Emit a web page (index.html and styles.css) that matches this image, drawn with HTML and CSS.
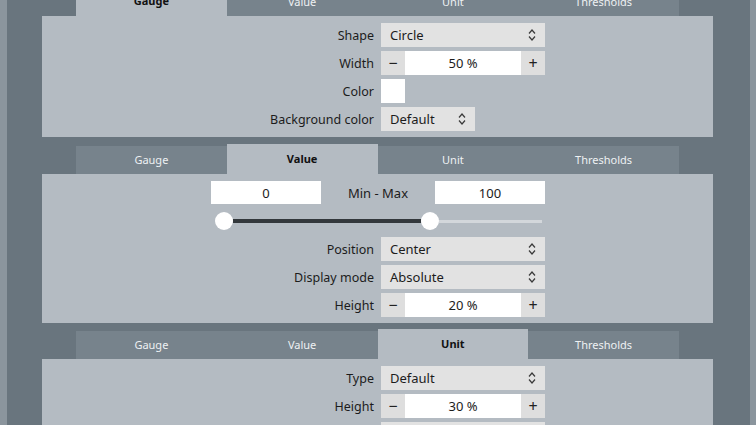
FILE: index.html
```html
<!DOCTYPE html>
<html>
<head>
<meta charset="utf-8">
<link rel="stylesheet" href="styles.css">
</head>
<body>
<div class="app">
  <section class="group first">
    <div class="tabs">
      <div class="tab active">Gauge</div>
      <div class="tab">Value</div>
      <div class="tab">Unit</div>
      <div class="tab">Thresholds</div>
    </div>
    <div class="panel p1">
      <div class="form">
        <div class="label">Shape</div>
        <div class="select wide"><span>Circle</span><svg class="chev" width="8" height="14" viewBox="0 0 8 14"><path d="M1 5.5 L4 2 L7 5.5 M1 8.5 L4 12 L7 8.5" fill="none" stroke="#3a3a3a" stroke-width="1.2"/></svg></div>
        <div class="label">Width</div>
        <div class="spin"><span class="btn">−</span><span class="val">50 %</span><span class="btn">+</span></div>
        <div class="label">Color</div>
        <div class="swatch"></div>
        <div class="label">Background color</div>
        <div class="select narrow"><span>Default</span><svg class="chev" width="8" height="14" viewBox="0 0 8 14"><path d="M1 5.5 L4 2 L7 5.5 M1 8.5 L4 12 L7 8.5" fill="none" stroke="#3a3a3a" stroke-width="1.2"/></svg></div>
      </div>
    </div>
  </section>

  <section class="group second">
    <div class="tabs">
      <div class="tab">Gauge</div>
      <div class="tab active">Value</div>
      <div class="tab">Unit</div>
      <div class="tab">Thresholds</div>
    </div>
    <div class="panel p2">
      <div class="minmax">
        <div class="num">0</div>
        <div class="mmlabel">Min - Max</div>
        <div class="num">100</div>
      </div>
      <div class="slider">
        <span class="thumb"></span>
        <span class="track dark" style="width:188px"></span>
        <span class="thumb"></span>
        <span class="track light"></span>
      </div>
      <div class="form">
        <div class="label">Position</div>
        <div class="select wide"><span>Center</span><svg class="chev" width="8" height="14" viewBox="0 0 8 14"><path d="M1 5.5 L4 2 L7 5.5 M1 8.5 L4 12 L7 8.5" fill="none" stroke="#3a3a3a" stroke-width="1.2"/></svg></div>
        <div class="label">Display mode</div>
        <div class="select wide"><span>Absolute</span><svg class="chev" width="8" height="14" viewBox="0 0 8 14"><path d="M1 5.5 L4 2 L7 5.5 M1 8.5 L4 12 L7 8.5" fill="none" stroke="#3a3a3a" stroke-width="1.2"/></svg></div>
        <div class="label">Height</div>
        <div class="spin"><span class="btn">−</span><span class="val">20 %</span><span class="btn">+</span></div>
      </div>
    </div>
  </section>

  <section class="group third">
    <div class="tabs">
      <div class="tab">Gauge</div>
      <div class="tab">Value</div>
      <div class="tab active">Unit</div>
      <div class="tab">Thresholds</div>
    </div>
    <div class="panel p3">
      <div class="form">
        <div class="label">Type</div>
        <div class="select wide"><span>Default</span><svg class="chev" width="8" height="14" viewBox="0 0 8 14"><path d="M1 5.5 L4 2 L7 5.5 M1 8.5 L4 12 L7 8.5" fill="none" stroke="#3a3a3a" stroke-width="1.2"/></svg></div>
        <div class="label">Height</div>
        <div class="spin"><span class="btn">−</span><span class="val">30 %</span><span class="btn">+</span></div>
        <div class="label">Color</div>
        <div class="select wide"><span>Default</span></div>
      </div>
    </div>
  </section>
</div>
</body>
</html>
```

FILE: styles.css
```css
html, body {
  margin: 0;
  padding: 0;
  height: 100%;
  overflow: hidden;
}
body {
  background: #69757e;
  font-family: "Noto Sans", "Open Sans", sans-serif;
  font-size: 12.3px;
  color: #1c1c1c;
}
.app {
  box-sizing: border-box;
  width: 756px;
  height: 480px;
  border-left: 7px solid #8b959d;
  border-right: 6px solid #8b959d;
  padding-left: 35px;
  margin-top: -14px;
}
.group {
  width: 671px;
}
.first { margin-bottom: 7px; }
.second { margin-bottom: 6px; }
.tabs {
  display: flex;
  margin: 0 34px;
  height: 30px;
  align-items: flex-end;
}
.tab {
  box-sizing: border-box;
  width: 151px;
  height: 28px;
  padding-bottom: 2px;
  background: #77838c;
  color: #eef1f3;
  font-size: 11px;
  display: flex;
  align-items: center;
  justify-content: center;
}
.tab.active {
  height: 30px;
  padding-bottom: 1px;
  background: #b4bbc2;
  color: #111;
  font-weight: bold;
}
.panel {
  background: #b4bbc2;
}
.p1 { padding: 7px 0 6px; }
.p2 { padding: 7px 0 6px; }
.p3 { padding: 7px 0 6px; height: 80px; }
.form {
  display: grid;
  grid-template-columns: 332px 164px;
  column-gap: 7px;
  row-gap: 4px;
  align-items: center;
}
.label {
  text-align: right;
  line-height: 23px;
  padding-top: 1px;
  font-size: 12.5px;
}
.select {
  height: 24px;
  background: #e2e2e2;
  display: flex;
  align-items: center;
  justify-content: space-between;
  padding: 0 9px 0 9px;
  box-sizing: border-box;
  font-size: 13px;
}
.select.wide { width: 164px; }
.select.narrow { width: 94px; }
.spin {
  display: flex;
  height: 24px;
  width: 164px;
}
.btn {
  width: 24px;
  background: #dedede;
  display: flex;
  align-items: center;
  justify-content: center;
  font-size: 16px;
  color: #222;
}
.val {
  flex: 1;
  background: #ffffff;
  display: flex;
  align-items: center;
  justify-content: center;
  font-size: 13px;
}
.swatch {
  width: 24px;
  height: 24px;
  background: #ffffff;
}
.minmax {
  display: grid;
  grid-template-columns: 110px 114px 110px;
  justify-content: center;
  align-items: center;
  height: 23px;
  margin-left: 1px;
}
.mmlabel {
  text-align: center;
  font-size: 13px;
}
.num {
  width: 110px;
  height: 23px;
  background: #ffffff;
  display: flex;
  align-items: center;
  justify-content: center;
  font-size: 13px;
}
.slider {
  display: flex;
  align-items: center;
  height: 18px;
  margin: 8px 0 7px 173px;
}
.thumb {
  width: 18px;
  height: 18px;
  border-radius: 50%;
  background: #ffffff;
  flex: none;
}
.track.dark {
  height: 4px;
  background: #33383c;
}
.track.light {
  width: 103px;
  height: 3px;
  background: #d3d7db;
}
```
